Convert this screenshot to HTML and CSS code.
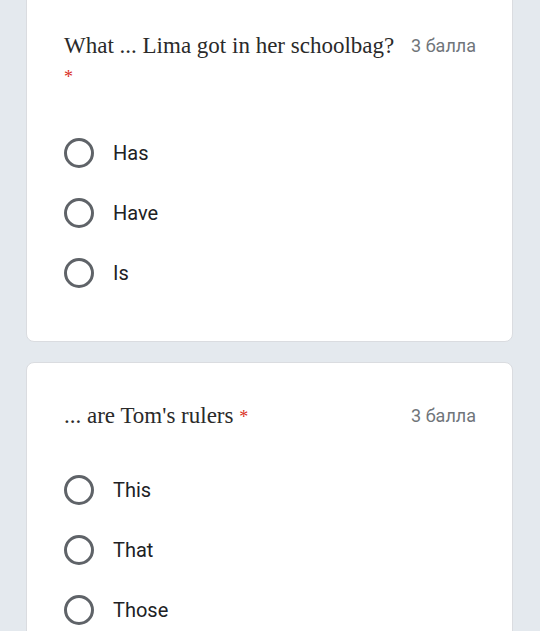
FILE: index.html
```html
<!DOCTYPE html>
<html lang="en">
<head>
<meta charset="utf-8">
<title>Quiz</title>
<link rel="stylesheet" href="styles.css">
</head>
<body>
<div class="form">
  <div class="card first">
    <div class="header">
      <div class="title">What ... Lima got in her schoolbag? <span class="req">*</span></div>
      <div class="points">3 балла</div>
    </div>
    <div class="options">
      <label class="option"><span class="radio"></span><span class="label">Has</span></label>
      <label class="option"><span class="radio"></span><span class="label">Have</span></label>
      <label class="option"><span class="radio"></span><span class="label">Is</span></label>
    </div>
  </div>
  <div class="card second">
    <div class="header">
      <div class="title">... are Tom's rulers <span class="req">*</span></div>
      <div class="points">3 балла</div>
    </div>
    <div class="options">
      <label class="option"><span class="radio"></span><span class="label">This</span></label>
      <label class="option"><span class="radio"></span><span class="label">That</span></label>
      <label class="option"><span class="radio"></span><span class="label">Those</span></label>
    </div>
  </div>
</div>
</body>
</html>
```
FILE: styles.css
```css
html, body {
  margin: 0;
  padding: 0;
  background: #e4e9ee;
  height: 100%;
  overflow: hidden;
}
.form {
  display: flex;
  flex-direction: column;
  gap: 20px;
  padding: 0 27px 0 26px;
}
.card {
  background: #fff;
  border: 1px solid #dadce0;
  border-radius: 8px;
  padding: 38px 36px 38px 37px;
}
.card.first {
  margin-top: -8px;
}
.header {
  display: flex;
  justify-content: space-between;
  align-items: flex-start;
  gap: 12px;
}
.title {
  font-family: "Liberation Serif", "Times New Roman", serif;
  font-size: 23px;
  line-height: 30px;
  color: #2a2a2a;
  flex: 1;
  max-width: 336px;
}
.second .title {
  max-width: none;
}
.req {
  color: #d93025;
  font-size: 18px;
}
.points {
  font-family: Roboto, "Noto Sans", sans-serif;
  font-size: 18px;
  line-height: 30px;
  color: #70757a;
  white-space: nowrap;
}
.options {
  display: flex;
  flex-direction: column;
  margin-top: 31px;
}
.second .options {
  margin-top: 28px;
}
.option {
  display: flex;
  align-items: center;
  height: 60px;
  gap: 19px;
}
.radio {
  width: 24px;
  height: 24px;
  border: 3px solid #5f6368;
  border-radius: 50%;
  flex: none;
}
.label {
  font-family: Roboto, "Noto Sans", sans-serif;
  font-size: 20px;
  color: #202124;
}
```
